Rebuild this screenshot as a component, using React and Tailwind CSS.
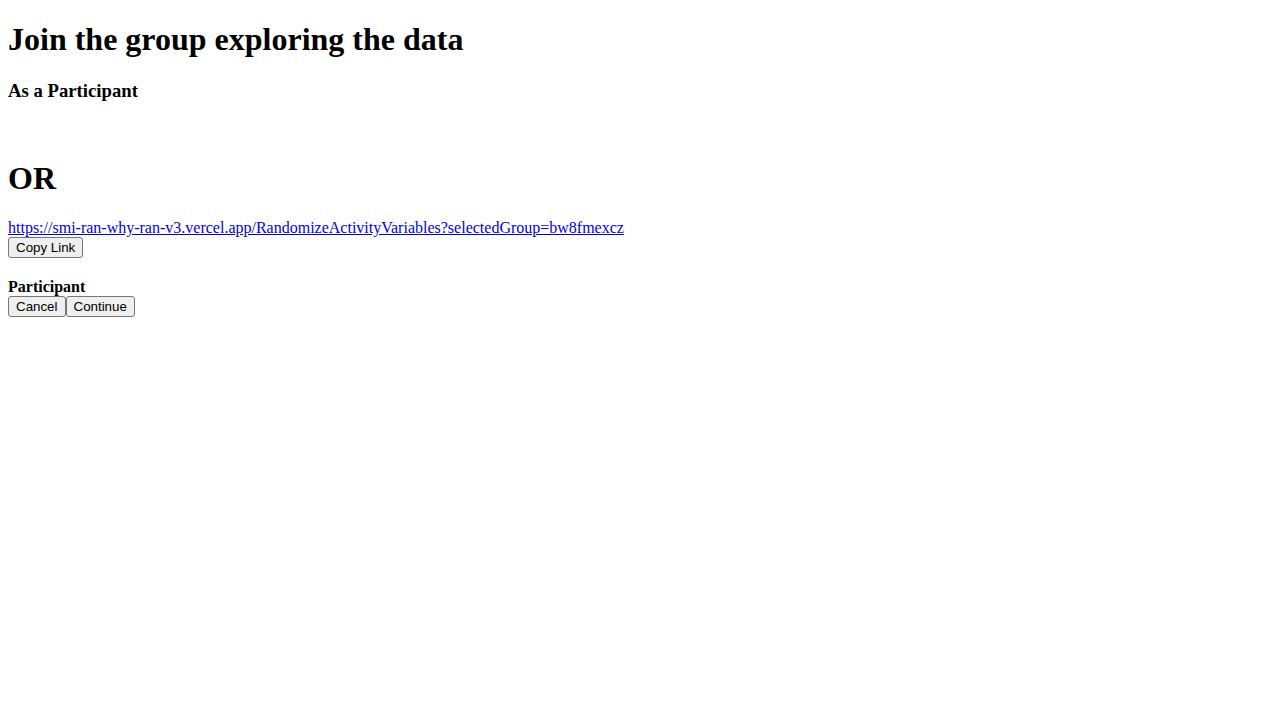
export default function App() {
  const btn =
    "bg-[#efefef] border border-[#767676] rounded-[3px] px-[7px] py-[2px] text-[13.333px] leading-[normal] text-black font-['Liberation_Sans',Arial,sans-serif] align-bottom";
  return (
    <div className="px-2 font-['Liberation_Serif','Times_New_Roman',serif] text-[16px] leading-[normal] text-black bg-white min-h-[720px]">
      <h1 className="text-[32px] font-bold leading-[normal] mt-[21.44px] mb-[21.44px]">
        Join the group exploring the data
      </h1>
      <h3 className="text-[18.72px] font-bold leading-[normal] mt-[18.72px] mb-[18.72px]">
        As a Participant
      </h3>
      <div className="h-[18.4px]" />
      <h1 className="text-[32px] font-bold leading-[normal] mt-[21.44px] mb-[21.44px]">
        OR
      </h1>
      <div>
        <a href="#" className="text-[#0000ee] underline">
          https://smi-ran-why-ran-v3.vercel.app/RandomizeActivityVariables?selectedGroup=bw8fmexcz
        </a>
      </div>
      <div className="flex">
        <button className={btn}>Copy Link</button>
      </div>
      <div className="h-[20.4px]" />
      <div className="font-bold">Participant</div>
      <div className="flex">
        <button className={btn}>Cancel</button>
        <button className={btn}>Continue</button>
      </div>
    </div>
  );
}
